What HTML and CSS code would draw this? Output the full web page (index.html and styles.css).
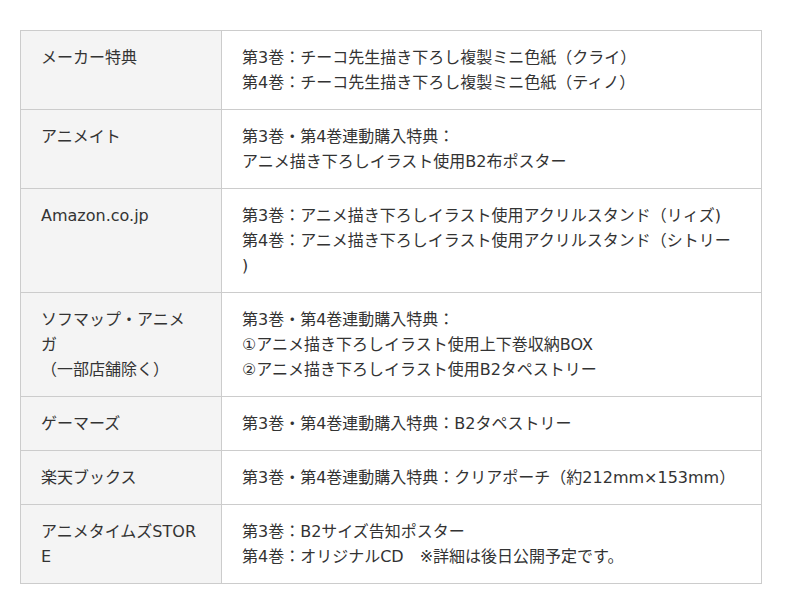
FILE: index.html
```html
<!DOCTYPE html>
<html lang="ja">
<head>
<meta charset="utf-8">
<link rel="stylesheet" href="styles.css">
</head>
<body>
<table class="bonus">
  <colgroup><col class="c-shop"><col class="c-item"></colgroup>
  <tbody>
    <tr><th>メーカー特典</th><td>第3巻：チーコ先生描き下ろし複製ミニ色紙（クライ）<br>第4巻：チーコ先生描き下ろし複製ミニ色紙（ティノ）</td></tr>
    <tr><th>アニメイト</th><td>第3巻・第4巻連動購入特典：<br>アニメ描き下ろしイラスト使用B2布ポスター</td></tr>
    <tr><th>Amazon.co.jp</th><td>第3巻：アニメ描き下ろしイラスト使用アクリルスタンド（リィズ)<br>第4巻：アニメ描き下ろしイラスト使用アクリルスタンド（シトリー)</td></tr>
    <tr><th>ソフマップ・アニメガ<br>（一部店舗除く）</th><td>第3巻・第4巻連動購入特典：<br>①アニメ描き下ろしイラスト使用上下巻収納BOX<br>②アニメ描き下ろしイラスト使用B2タペストリー</td></tr>
    <tr><th>ゲーマーズ</th><td>第3巻・第4巻連動購入特典：B2タペストリー</td></tr>
    <tr><th>楽天ブックス</th><td>第3巻・第4巻連動購入特典：クリアポーチ（約212mm×153mm）</td></tr>
    <tr><th>アニメタイムズSTORE</th><td>第3巻：B2サイズ告知ポスター<br>第4巻：オリジナルCD　※詳細は後日公開予定です。</td></tr>
  </tbody>
</table>
</body>
</html>
```
FILE: styles.css
```css
html, body {
  margin: 0;
  background: #fff;
}
body {
  padding: 30px 20px;
  font-family: "DejaVu Sans", "Noto Sans CJK JP", sans-serif;
  font-size: 16px;
  line-height: 25px;
  color: #333;
}
.bonus {
  width: 742px;
  border-collapse: collapse;
  table-layout: fixed;
}
.c-shop { width: 201px; }
.bonus th,
.bonus td {
  border: 1px solid #ccc;
  padding: 14px 27px 14px 20px;
  text-align: left;
  vertical-align: top;
  font-weight: normal;
  word-break: break-all;
  line-break: anywhere;
}
.bonus th {
  background: #f4f4f4;
  padding-right: 22px;
}
```
